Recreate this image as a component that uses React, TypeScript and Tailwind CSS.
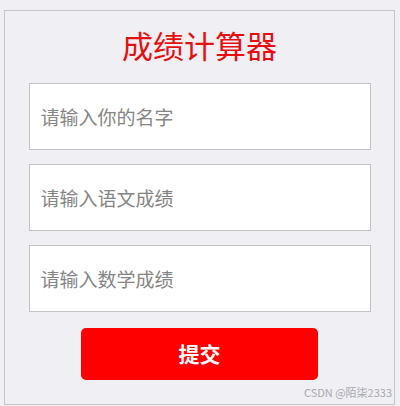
const FIELDS = ['请输入你的名字', '请输入语文成绩', '请输入数学成绩'];

export default function App() {
  return (
    <div
      className="h-[406px] w-[400px] overflow-hidden bg-[#efeff4] pt-[10px] pl-[4px]"
      style={{ fontFamily: '"Noto Sans CJK SC", "Noto Sans", sans-serif' }}
    >
      <div className="relative flex h-[395px] w-[391px] flex-col items-center border border-[#c6c6ca] bg-[#efeff4]">
        <h1 className="mt-[14px] h-[40px] text-[31px] leading-[40px] font-normal text-[#e50f0f]">成绩计算器</h1>
        <div className="mt-[18px] flex flex-col gap-[14px]">
          {FIELDS.map((f) => (
            <input
              key={f}
              type="text"
              placeholder={f}
              className="h-[67px] w-[342px] border border-[#c3c3c3] bg-white px-[11px] text-[19px] text-[#333] outline-none placeholder:text-[#858585]"
            />
          ))}
        </div>
        <button
          type="button"
          className="mt-[16px] h-[52px] w-[237px] rounded-[5px] bg-[#ff0000] text-[21px] font-bold text-white"
        >
          提交
        </button>
        <span className="absolute right-[2px] bottom-[4px] text-[11px] text-[#a9a9b0]">
          CSDN @陌柒2333
        </span>
      </div>
    </div>
  );
}
